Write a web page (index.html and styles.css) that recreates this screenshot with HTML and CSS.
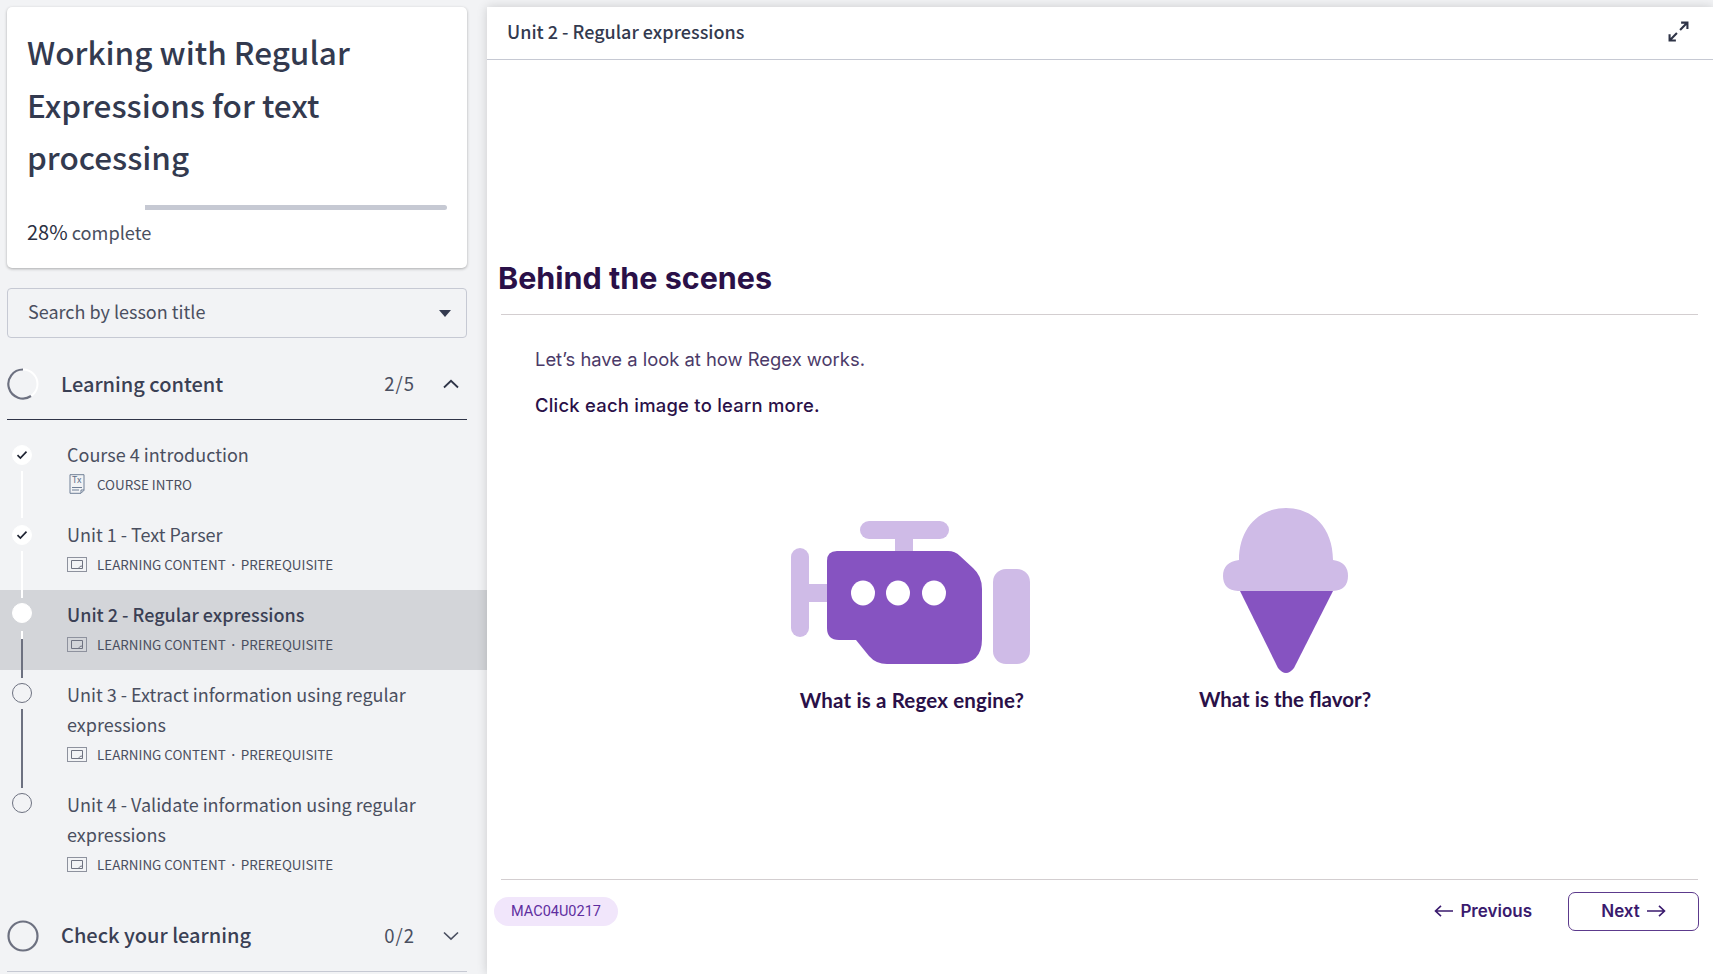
FILE: index.html
```html
<!DOCTYPE html>
<html lang="en">
<head>
  <meta charset="UTF-8">
  <title>Unit 2 - Regular expressions</title>
  <link rel="stylesheet" href="styles.css">
</head>
<body>
  <svg class="defs" width="0" height="0">
    <symbol id="slides" viewBox="0 0 20 15">
      <rect x="0.5" y="0.5" width="19" height="14" fill="none" stroke="#8e929e"/>
      <path d="M4.5 3.5h11v8h-11zM12 11.5c0-1.5 1-2.5 3.5-2.5" fill="none" stroke="#6f7381"/>
    </symbol>
    <symbol id="check" viewBox="0 0 12 10">
      <path d="M1.5 5.2 4.4 8 10.5 1.6" fill="none" stroke="#1f2433" stroke-width="1.7"/>
    </symbol>
  </svg>

  <!-- Barra lateral -->
  <aside class="sidebar">
    <div class="course-card">
      <h1>Working with Regular Expressions for text processing</h1>
      <div class="progress"><div class="progress-done"></div></div>
      <p class="progress-text"><b>28%</b> complete</p>
    </div>

    <div class="search">
      <span>Search by lesson title</span>
      <span class="caret"></span>
    </div>

    <div class="section-head section-open">
      <svg class="ring" viewBox="0 0 32 32">
        <circle cx="16" cy="16" r="14.5" fill="none" stroke="#ffffff" stroke-width="2"/>
        <path d="M24 28A14.5 14.5 0 1 1 16 1.5" fill="none" stroke="#6d7180" stroke-width="2.2"/>
      </svg>
      <span class="section-title">Learning content</span>
      <span class="section-count">2/5</span>
      <svg class="chevron" viewBox="0 0 16 10"><path d="M1 8.5 8 1.8l7 6.7" fill="none" stroke="#2f3447" stroke-width="1.8"/></svg>
    </div>

    <ul class="lessons">
      <li class="lesson">
        <div class="rail"><span class="dot dot-done"><svg class="check"><use href="#check"/></svg></span><span class="line line-white"></span></div>
        <div class="lesson-body">
          <div class="lesson-title">Course 4 introduction</div>
          <div class="lesson-meta">
            <span class="meta-icon">
              <svg width="16" height="20" viewBox="0 0 16 20">
                <path d="M1 .7h14v15.6l-3 3H1z" fill="#f2f3f5" stroke="#6f7f96"/>
                <path d="M12 19v-3h3" fill="none" stroke="#6f7f96"/>
                <path d="M3 13.5h10M3 16h7" stroke="#6f7f96"/>
              </svg>
              <span class="tx">Tx</span>
            </span>
            COURSE INTRO
          </div>
        </div>
      </li>
      <li class="lesson">
        <div class="rail"><span class="dot dot-done"><svg class="check"><use href="#check"/></svg></span><span class="line line-white"></span></div>
        <div class="lesson-body">
          <div class="lesson-title">Unit 1 - Text Parser</div>
          <div class="lesson-meta"><span class="meta-icon"><svg class="slides"><use href="#slides"/></svg></span>LEARNING CONTENT <i>·</i> PREREQUISITE</div>
        </div>
      </li>
      <li class="lesson lesson-active">
        <div class="rail"><span class="dot dot-current"></span><span class="line line-mixed"></span></div>
        <div class="lesson-body">
          <div class="lesson-title">Unit 2 - Regular expressions</div>
          <div class="lesson-meta"><span class="meta-icon"><svg class="slides"><use href="#slides"/></svg></span>LEARNING CONTENT <i>·</i> PREREQUISITE</div>
        </div>
      </li>
      <li class="lesson">
        <div class="rail"><span class="dot"></span><span class="line"></span></div>
        <div class="lesson-body">
          <div class="lesson-title">Unit 3 - Extract information using regular expressions</div>
          <div class="lesson-meta"><span class="meta-icon"><svg class="slides"><use href="#slides"/></svg></span>LEARNING CONTENT <i>·</i> PREREQUISITE</div>
        </div>
      </li>
      <li class="lesson">
        <div class="rail"><span class="dot"></span></div>
        <div class="lesson-body">
          <div class="lesson-title">Unit 4 - Validate information using regular expressions</div>
          <div class="lesson-meta"><span class="meta-icon"><svg class="slides"><use href="#slides"/></svg></span>LEARNING CONTENT <i>·</i> PREREQUISITE</div>
        </div>
      </li>
    </ul>

    <div class="section-head section-closed">
      <svg class="ring" viewBox="0 0 32 32"><circle cx="16" cy="16" r="14.5" fill="none" stroke="#6d7180" stroke-width="2.2"/></svg>
      <span class="section-title">Check your learning</span>
      <span class="section-count">0/2</span>
      <svg class="chevron" viewBox="0 0 16 10"><path d="M1 1.5 8 8.2l7-6.7" fill="none" stroke="#4a4f60" stroke-width="1.6"/></svg>
    </div>
  </aside>

  <!-- Contenido -->
  <main class="content">
    <header class="content-head">
      <span>Unit 2 - Regular expressions</span>
      <svg class="expand" viewBox="0 0 20 20">
        <path d="M11.5 8.5 18 2M12.5 1.5H18.5V7.5M8.5 11.5 2 18M1.5 12.5V18.5H7.5" fill="none" stroke="#2f3447" stroke-width="2"/>
      </svg>
    </header>

    <h2>Behind the scenes</h2>
    <div class="rule"></div>

    <div class="intro">
      <p>Let’s have a look at how Regex works.</p>
      <p class="intro-strong">Click each image to learn more.</p>
    </div>

    <div class="options">
      <div class="option">
        <svg width="239" height="143" viewBox="0 0 239 143">
          <rect x="69" y="0" width="89" height="18" rx="9" fill="#cfbbe7"/>
          <rect x="104" y="16" width="18" height="18" fill="#cfbbe7"/>
          <rect x="0" y="27" width="18" height="89" rx="9" fill="#cfbbe7"/>
          <rect x="16" y="63" width="24" height="18" fill="#cfbbe7"/>
          <rect x="202" y="48" width="37" height="95" rx="13" fill="#cfbbe7"/>
          <path d="M46 30H157Q164 30 169 35L182 47Q191 55 191 68V118Q191 143 166 143H96Q85 143 78 135L65 119H48Q36 119 36 107V40Q36 30 46 30Z" fill="#8653c1"/>
          <ellipse cx="72" cy="72" rx="12" ry="12.5" fill="#fff"/>
          <ellipse cx="107" cy="72" rx="12" ry="12.5" fill="#fff"/>
          <ellipse cx="143" cy="72" rx="12" ry="12.5" fill="#fff"/>
        </svg>
        <div class="option-label label-engine">What is a Regex engine?</div>
      </div>
      <div class="option">
        <svg width="125" height="166" viewBox="0 0 125 166">
          <path d="M17 83 55 160Q63 170 71 160L110 83Z" fill="#8653c1"/>
          <path d="M16 52C16 20 36 0 63 0S110 20 110 52H110Q125 54 125 68T110 83H15Q0 82 0 68T16 52Z" fill="#cfbbe7"/>
        </svg>
        <div class="option-label label-flavor">What is the flavor?</div>
      </div>
    </div>

    <div class="rule rule-foot"></div>
    <footer class="content-foot">
      <span class="code-pill">MAC04U0217</span>
      <div class="nav-buttons">
        <button class="btn-plain" type="button">
          <svg class="arrow" viewBox="0 0 20 12"><path d="M19 6H1.5M7 .8 1.5 6 7 11.2" fill="none" stroke="#3a1a6e" stroke-width="1.6"/></svg>
          Previous
        </button>
        <button class="btn-outline" type="button">
          Next
          <svg class="arrow" viewBox="0 0 20 12"><path d="M1 6h17.5M13 .8 18.5 6 13 11.2" fill="none" stroke="#3a1a6e" stroke-width="1.6"/></svg>
        </button>
      </div>
    </footer>
  </main>
</body>
</html>
```

FILE: styles.css
```css
* {
  box-sizing: border-box;
}
body {
  margin: 0;
  height: 100vh;
  overflow: hidden;
  display: flex;
  background-color: #f2f3f5;
  color: #333a4f;
  font-family: "Noto Sans CJK SC", "Open Sans", sans-serif;
}
.defs {
  position: absolute;
}

/* Barra lateral */
.sidebar {
  width: 487px;
  flex: none;
}
.course-card {
  margin: 7px 20px 20px 7px;
  height: 261px;
  padding: 18px 20px 0;
  background: #ffffff;
  border-radius: 5px;
  box-shadow: 0 1px 3px rgba(0, 0, 0, 0.3);
}
.course-card h1 {
  margin: 0;
  font-size: 31.5px;
  line-height: 52.5px;
  font-weight: 500;
  color: #333a4f;
}
.progress {
  margin-top: 22px;
  height: 5px;
  background: #c6c9d3;
  border-radius: 3px;
}
.progress-done {
  width: 118px;
  height: 5px;
  background: #ffffff;
}
.progress-text {
  margin: 8px 0 0;
  font-size: 18.2px;
  line-height: 28px;
  color: #4a4f60;
}
.progress-text b {
  font-weight: 400;
  font-size: 20px;
  color: #2b3042;
}
.search {
  margin: 0 20px 13px 7px;
  height: 50px;
  padding: 0 15px 4px 20px;
  display: flex;
  align-items: center;
  justify-content: space-between;
  border: 1px solid #c6c9d3;
  border-radius: 4px;
  font-size: 18px;
  color: #4a4f60;
}
.caret {
  width: 0;
  height: 0;
  margin-top: 4px;
  border-left: 6px solid transparent;
  border-right: 6px solid transparent;
  border-top: 7px solid #333a4f;
}
.section-head {
  margin: 0 20px 0 7px;
  height: 69px;
  padding-bottom: 4px;
  display: flex;
  align-items: center;
  border-bottom: 1px solid #2f3447;
}
.section-closed {
  margin-top: 12px;
  height: 70px;
  border-bottom-color: #c6c9d3;
}
.ring {
  width: 32px;
  height: 32px;
  margin-top: 2px;
  margin-right: 22px;
}
.section-title {
  flex: 1;
  font-size: 20px;
  font-weight: 500;
  color: #3a4054;
}
.section-count {
  font-size: 18.5px;
  letter-spacing: 1px;
  color: #4a4f60;
  margin-right: 28px;
}
.chevron {
  width: 16px;
  height: 10px;
  margin-top: 2px;
  margin-right: 8px;
}
.lessons {
  list-style: none;
  margin: 10px 0 0;
  padding: 0;
}
.lesson {
  display: flex;
  padding: 9px 20px 11px 12px;
}
.lesson-active {
  background: #d3d5d9;
}
.lesson-active .lesson-title {
  font-weight: 500;
  color: #3a4054;
}
.rail {
  width: 20px;
  margin-right: 35px;
  flex: none;
  display: flex;
  flex-direction: column;
  align-items: center;
  padding-top: 4px;
}
.dot {
  width: 20px;
  height: 20px;
  flex: none;
  display: flex;
  align-items: center;
  justify-content: center;
  border: 1px solid #6d7180;
  border-radius: 50%;
}
.dot-done,
.dot-current {
  background: #ffffff;
  border-color: #ffffff;
}
.dot-done {
  margin-top: 2px;
}
.check {
  width: 12px;
  height: 10px;
}
.line {
  flex: 1;
  width: 2px;
  margin: 6px 0 -19px;
  background: #6d7180;
}
.line-white {
  background: #ffffff;
}
.line-mixed {
  margin-top: 8px;
  background: linear-gradient(#ffffff 18%, #6d7180 18%);
}
.lesson-body {
  flex: 1;
}
.lesson-title {
  font-size: 18px;
  line-height: 30px;
  color: #4a4f60;
}
.lesson-meta {
  display: flex;
  align-items: center;
  height: 30px;
  font-size: 13.4px;
  color: #4a4f60;
}
.lesson-meta i {
  font-style: normal;
  font-size: 10px;
  margin: 0 2.5px;
}
.meta-icon {
  position: relative;
  width: 20px;
  margin-right: 10px;
  display: flex;
  justify-content: center;
}
.slides {
  width: 20px;
  height: 15px;
}
.tx {
  position: absolute;
  top: 1px;
  left: 5px;
  font-size: 9px;
  line-height: 10px;
  color: #5f6f88;
}

/* Contenido */
.content {
  flex: 1;
  margin-top: 7px;
  display: flex;
  flex-direction: column;
  background: #ffffff;
  box-shadow: 0 0 10px rgba(0, 0, 0, 0.16);
  font-family: Inter, sans-serif;
  color: #2a1048;
}
.content-head {
  height: 53px;
  padding: 0 24px 4px 20px;
  display: flex;
  align-items: center;
  justify-content: space-between;
  border-bottom: 1px solid #c6c9d3;
  font-family: "Noto Sans CJK SC", "Open Sans", sans-serif;
  font-size: 18px;
  font-weight: 500;
  color: #333a4f;
}
.expand {
  width: 21px;
  height: 21px;
}
.content h2 {
  margin: 198px 0 0 11px;
  font-size: 30.5px;
  line-height: 40px;
  font-weight: 700;
  color: #2a1048;
}
.rule {
  height: 1px;
  margin: 16px 15px 0 14px;
  background: #d3ced0;
}
.intro {
  margin: 30px 0 0 48px;
}
.intro p {
  margin: 0 0 18px;
  font-size: 18.4px;
  line-height: 28px;
  color: #4b3a68;
}
.intro .intro-strong {
  font-weight: 500;
  letter-spacing: 0.25px;
  color: #2a1048;
}
.options {
  margin-top: 71px;
  display: flex;
  justify-content: center;
  align-items: flex-end;
  gap: 75px;
  padding-right: 5px;
}
.option {
  width: 300px;
  display: flex;
  flex-direction: column;
  align-items: center;
}
.option-label {
  font-family: Lato, sans-serif;
  font-size: 20.5px;
  line-height: 26px;
  font-weight: 700;
  color: #2a1048;
}
.label-engine {
  margin-top: 23px;
  margin-left: 4px;
  letter-spacing: 0.15px;
}
.label-flavor {
  margin-top: 12px;
  margin-bottom: 1px;
}
.rule-foot {
  margin-top: auto;
}
.content-foot {
  height: 94px;
  padding: 12px 14px 43px 7px;
  display: flex;
  align-items: center;
  justify-content: space-between;
}
.code-pill {
  width: 124px;
  height: 29px;
  display: flex;
  align-items: center;
  justify-content: center;
  background: #f1e6fb;
  border-radius: 15px;
  font-family: Roboto, sans-serif;
  font-size: 14.5px;
  color: #5f2ea0;
}
.nav-buttons {
  display: flex;
  align-items: center;
  gap: 36px;
}
.nav-buttons button {
  display: flex;
  align-items: center;
  justify-content: center;
  gap: 6px;
  padding-bottom: 2px;
  background: none;
  font-family: Inter, sans-serif;
  font-size: 17px;
  font-weight: 600;
  color: #3a1a6e;
  cursor: pointer;
}
.btn-plain {
  border: none;
  padding: 0;
}
.btn-outline {
  width: 131px;
  height: 39px;
  border: 1.5px solid #5c3a8c;
  border-radius: 7px;
}
.arrow {
  width: 20px;
  height: 12px;
}
```
